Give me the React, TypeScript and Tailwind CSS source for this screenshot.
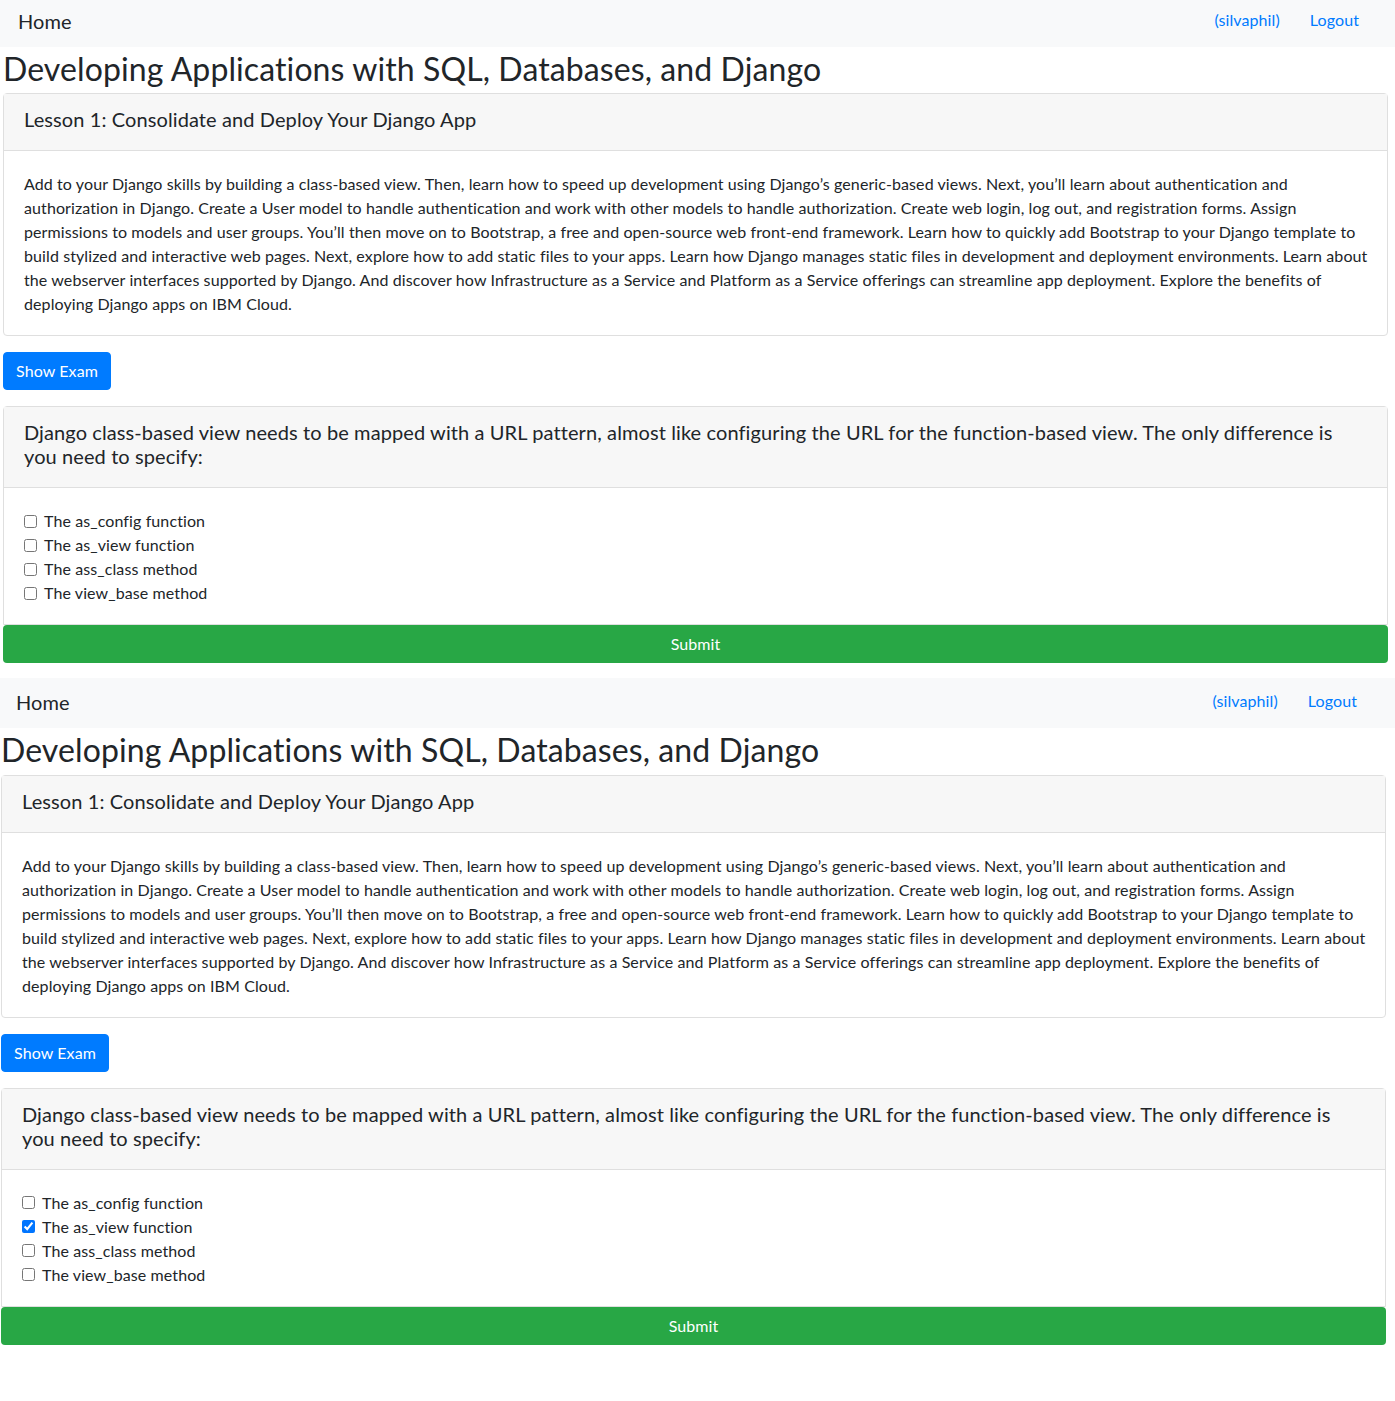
import React from "react";

// paragraph split the same way the page wraps it
const LESSON_LINES = [
  "Add to your Django skills by building a class-based view. Then, learn how to speed up development using Django\u2019s generic-based views. Next, you\u2019ll learn about authentication and",
  "authorization in Django. Create a User model to handle authentication and work with other models to handle authorization. Create web login, log out, and registration forms. Assign",
  "permissions to models and user groups. You\u2019ll then move on to Bootstrap, a free and open-source web front-end framework. Learn how to quickly add Bootstrap to your Django template to",
  "build stylized and interactive web pages. Next, explore how to add static files to your apps. Learn how Django manages static files in development and deployment environments. Learn about",
  "the webserver interfaces supported by Django. And discover how Infrastructure as a Service and Platform as a Service offerings can streamline app deployment. Explore the benefits of",
  "deploying Django apps on IBM Cloud.",
];

const CHOICES = [
  "The as_config function",
  "The as_view function",
  "The ass_class method",
  "The view_base method",
];

function Page({ first, checkedIndex }: { first: boolean; checkedIndex: number | null }) {
  return (
    <div className={first ? "-mt-[3px] mb-[15px]" : "mb-[15px]"}>
      {/* navbar */}
      <nav
        className={
          "flex h-[50px] items-center justify-between bg-[#f8f9fa] " +
          (first ? "pl-[18px] pr-[36px]" : "pl-[16px] pr-[38px]")
        }
      >
        <a className="relative -top-px text-[20px] leading-[30px] text-[#212529]">Home</a>
        <div className="relative -top-[2px] flex items-center gap-[30px] text-base leading-6 text-[#007bff]">
          <a>(silvaphil)</a>
          <a>Logout</a>
        </div>
      </nav>

      <div className={first ? "pl-[3px] pr-[7px]" : "pl-[1px] pr-[9px]"}>
        <h2 className="mb-[5px] pt-[3px] text-[32px] leading-[1.2] font-normal text-[#212529]">
          Developing Applications with SQL, Databases, and Django
        </h2>

        {/* lesson card */}
        <div className="rounded-[4px] border border-[#dfdfdf]">
          <div className="border-b border-[#dfdfdf] bg-[#f7f7f7] px-5 pt-[13px] pb-[11px]">
            <h5 className="mb-2 text-[20px] leading-[1.2] text-[#212529]">
              Lesson 1: Consolidate and Deploy Your Django App
            </h5>
          </div>
          <div className="px-5 pt-[21px] pb-[19px]">
            <p className="text-base leading-6 text-[#212529]">
              {LESSON_LINES.map((l) => (
                <span key={l} className="block whitespace-nowrap">
                  {l}
                </span>
              ))}
            </p>
          </div>
        </div>

        <button className="mt-4 mb-4 rounded-[4px] border border-[#007bff] bg-[#007bff] px-3 py-1.5 text-base leading-6 text-white">
          Show Exam
        </button>

        {/* question card */}
        <form>
          <div className="rounded-t-[4px] border border-[#dfdfdf]">
            <div className="border-b border-[#dfdfdf] bg-[#f7f7f7] px-5 pt-[13px] pb-[11px]">
              <h5 className="mb-2 text-[20px] leading-[1.2] text-[#212529]">
                Django class-based view needs to be mapped with a URL pattern, almost like configuring the URL for the
                function-based view. The only difference is
                <br />
                you need to specify:
              </h5>
            </div>
            <div className="px-5 pt-[21px] pb-[19px] text-base leading-6 text-[#212529]">
              {CHOICES.map((c, i) => (
                <label key={c} className="flex items-center">
                  <input
                    type="checkbox"
                    defaultChecked={checkedIndex === i}
                    className="m-0 mr-[7px] h-[13px] w-[13px] shrink-0"
                  />
                  <span>{c}</span>
                </label>
              ))}
            </div>
          </div>
          <button
            type="button"
            className="block h-[38px] w-full rounded-[4px] bg-[#28a745] text-base text-white"
          >
            Submit
          </button>
        </form>
      </div>
    </div>
  );
}

export default function App() {
  return (
    <div className="min-h-[1401px] bg-white font-['Lato',sans-serif] tracking-[0.1px] text-[#212529]">
      <Page first={true} checkedIndex={null} />
      <Page first={false} checkedIndex={1} />
    </div>
  );
}
